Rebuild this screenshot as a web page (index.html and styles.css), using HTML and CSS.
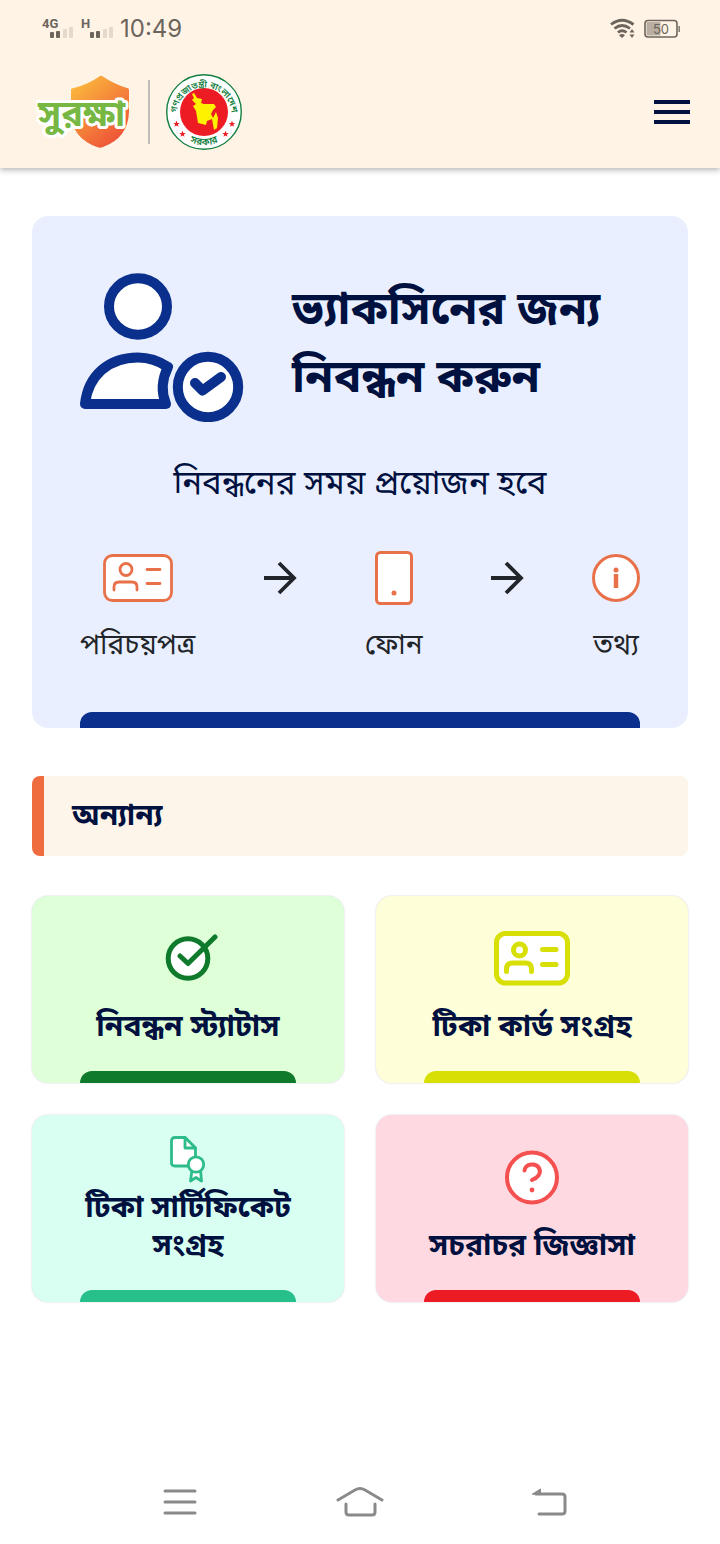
FILE: index.html
```html
<!DOCTYPE html>
<html lang="bn">
<head>
<meta charset="utf-8">
<meta name="viewport" content="width=device-width, initial-scale=1">
<title>সুরক্ষা</title>
<link rel="stylesheet" href="styles.css">
</head>
<body>
<header class="top">
  <div class="status">
    <div class="status-group">
      <svg class="signals" width="72" height="24" viewBox="0 0 72 24" aria-hidden="true">
        <g fill="#6b655d">
          <text class="net" x="0" y="11">4G</text><text class="net" x="39" y="11">H</text>
          <rect x="8" y="15" width="4" height="6" rx="1"/><rect x="14" y="14" width="4" height="7" rx="1"/>
          <rect x="48" y="15" width="4" height="6" rx="1"/><rect x="54" y="14" width="4" height="7" rx="1"/>
        </g>
        <g fill="#e3d9cc">
          <rect x="21" y="12" width="4" height="9" rx="1"/><rect x="27" y="10" width="4" height="11" rx="1"/>
          <rect x="61" y="12" width="4" height="9" rx="1"/><rect x="67" y="10" width="4" height="11" rx="1"/>
        </g>
      </svg>
      <time class="clock">10:49</time>
    </div>
    <div class="status-group">
      <svg width="26" height="22" viewBox="0 0 26 22" aria-hidden="true">
        <g fill="none" stroke="#6b655d" stroke-width="2.8">
          <path d="M1 6.500Q12 -2 23.500 6.500M4.500 10.500Q12 4.500 20 10.500M8 14.500Q12 11 16.500 14.500"/>
        </g>
        <path d="M9 17.200Q12 14.800 15 17.200L12 20ZM19.500 14.500L22 11L24.500 14.500ZM19.500 16.500L22 20L24.500 16.500Z" fill="#6b655d"/>
      </svg>
      <svg class="battery" width="36" height="20" viewBox="0 0 36 20" aria-hidden="true">
        <rect x="1" y="1.500" width="32" height="16.500" rx="3" fill="none" stroke="#6b655d" stroke-width="1.600"/>
        <rect x="2.500" y="3" width="14" height="13.500" rx="1" fill="#b9aea2"/>
        <rect x="34.500" y="7" width="1.300" height="6" fill="#6b655d"/>
        <text class="charge" x="17" y="15" text-anchor="middle">50</text>
      </svg>
    </div>
  </div>
  <div class="brand-bar">
    <a class="brand" href="#" aria-label="সুরক্ষা">
      <svg width="96" height="80" viewBox="0 0 96 80">
        <defs><linearGradient id="shield" x1="0" y1="0" x2="0.700" y2="1"><stop offset="0" stop-color="#fcc43c"/><stop offset="1" stop-color="#ee5238"/></linearGradient></defs>
        <path d="M64 4Q65 3.500 66 4Q78 12 91 16Q93 16 93 18V40Q92 66 67 75Q64 76.500 61 75Q36 66 35 42V18Q35 16 38 16Q53 12 64 4Z" fill="url(#shield)"/>
        <text class="wordmark" x="2" y="54">সুরক্ষা</text>
      </svg>
    </a>
    <span class="divider"></span>
    <svg class="seal" width="76" height="76" viewBox="0 0 76 76" role="img" aria-label="গণপ্রজাতন্ত্রী বাংলাদেশ সরকার">
      <defs>
        <path id="arc-top" d="M10.500 41A27.500 27.500 0 1 1 65.500 41"/>
        <path id="arc-bottom" d="M16 63A34 34 0 0 0 60 63"/>
        <path id="star" d="M0 -3.400L0.850 -1.100L3.250 -1.050L1.350 0.450L2 2.750L0 1.400L-2 2.750L-1.350 0.450L-3.250 -1.050L-0.850 -1.100Z"/>
      </defs>
      <circle cx="38" cy="38" r="37.300" fill="#fff" stroke="#128040" stroke-width="1.400"/>
      <circle cx="38" cy="38" r="24" fill="#ed1c24"/>
      <path d="M26 20L28 19L31 24L36 25L35 29L38 30H48L50 33L47 36L45 40L47 44L50 38L52 44L51 54L48 56L46 45L41 47L40 51L32 49L30 37L27 32L30 30L26 26L28 24Z" fill="#fff200"/>
      <g fill="#ed1c24"><use href="#star" x="10.500" y="50"/><use href="#star" x="16.500" y="60"/><use href="#star" x="59.500" y="60"/><use href="#star" x="66" y="50"/></g>
      <text class="seal-text"><textPath href="#arc-top" startOffset="50%" text-anchor="middle">গণপ্রজাতন্ত্রী বাংলাদেশ</textPath></text>
      <text class="seal-text seal-text-base"><textPath href="#arc-bottom" startOffset="50%" text-anchor="middle">সরকার</textPath></text>
    </svg>
    <button class="menu" type="button" aria-label="মেনু"><span></span><span></span><span></span></button>
  </div>
</header>

<main class="page">
  <section class="hero">
    <div class="hero-head">
      <svg class="hero-icon" width="164" height="150" viewBox="0 0 164 150" aria-hidden="true">
        <g fill="#fff" stroke="#0a2f8c" stroke-width="10" stroke-linejoin="round" stroke-linecap="round">
          <ellipse cx="58" cy="34.500" rx="29" ry="28.200"/>
          <path d="M5 132C8 104 28 85.500 58 85.500C69 85.500 79 89 88 95C82 107 81 120 86 132Z"/>
          <circle cx="128" cy="115" r="30.200"/>
          <path d="M115 111L122.500 118.500L141 105" fill="none"/>
        </g>
      </svg>
      <h1 class="hero-title">ভ্যাকসিনের জন্য নিবন্ধন করুন</h1>
    </div>
    <p class="hero-sub">নিবন্ধনের সময় প্রয়োজন হবে</p>
    <div class="steps">
      <div class="step">
        <svg width="70" height="56" viewBox="0 0 70 56" aria-hidden="true">
          <g fill="#fff" stroke="#e8714a" stroke-width="2.800" stroke-linecap="round">
            <rect x="1.500" y="5.500" width="67" height="45" rx="8"/><circle cx="23" cy="19.500" r="6"/>
            <path d="M11 40V37Q11 32 16 32H29Q34 32 34 37V40" fill="none"/><path d="M44 19.500H57M44 33.500H57"/>
          </g>
        </svg>
        <span>পরিচয়পত্র</span>
      </div>
      <svg class="arrow" width="34" height="56" viewBox="0 0 34 56" aria-hidden="true"><path d="M1 28H31M16 13L31 28L16 43" fill="none" stroke="#212529" stroke-width="3.800"/></svg>
      <div class="step">
        <svg width="40" height="56" viewBox="0 0 40 56" aria-hidden="true"><rect x="2.500" y="2.500" width="35" height="51" rx="4" fill="#fff" stroke="#e8714a" stroke-width="3"/><circle cx="20" cy="43" r="2.500" fill="#e8714a"/></svg>
        <span>ফোন</span>
      </div>
      <svg class="arrow" width="34" height="56" viewBox="0 0 34 56" aria-hidden="true"><path d="M1 28H31M16 13L31 28L16 43" fill="none" stroke="#212529" stroke-width="3.800"/></svg>
      <div class="step">
        <svg width="48" height="56" viewBox="0 0 48 56" aria-hidden="true"><circle cx="24" cy="28" r="22.500" fill="#fff" stroke="#e8714a" stroke-width="3"/><circle cx="24" cy="20" r="2.500" fill="#e8714a"/><path d="M24 24V38" stroke="#e8714a" stroke-width="4.500"/></svg>
        <span>তথ্য</span>
      </div>
    </div>
    <div class="hero-bar"></div>
  </section>

  <h2 class="section-title">অন্যান্য</h2>

  <nav class="cards">
    <a class="card card-green" href="#">
      <svg class="card-icon" width="60" height="56" viewBox="-2 0 60 56" aria-hidden="true">
        <g fill="#fff" stroke="#0f7a2c" stroke-width="5" stroke-linecap="round" stroke-linejoin="round"><circle cx="28" cy="28.500" r="19.800"/><path d="M20 26L28 33.500L55 7" fill="none"/></g>
      </svg>
      <span>নিবন্ধন স্ট্যাটাস</span>
    </a>
    <a class="card card-yellow" href="#">
      <svg class="card-icon" width="78" height="56" viewBox="0 0 78 56" aria-hidden="true">
        <g fill="#fff" stroke="#d8df05" stroke-width="5" stroke-linecap="round"><rect x="3.500" y="3.500" width="71" height="49.500" rx="9"/><circle cx="26.500" cy="20" r="6"/><path d="M13.500 41.500V39Q13.500 33 19.500 33H32.500Q38.500 33 38.500 39V41.500" fill="none"/><path d="M49.500 19.500H63M49.500 34.500H63"/></g>
      </svg>
      <span>টিকা কার্ড সংগ্রহ</span>
    </a>
    <a class="card card-teal" href="#">
      <svg class="card-icon-tight" width="38" height="48" viewBox="0 0 38 48" aria-hidden="true">
        <g fill="#fff" stroke="#2ebd8a" stroke-width="2.800" stroke-linejoin="round"><path d="M6 2.500H16L26.500 13V31H6Q2.500 31 2.500 28V6Q2.500 2.500 6 2.500Z"/><path d="M16 2.500V13H26.500Z"/><path d="M23 35L21.500 46L27 42.500L32.500 46L31.500 35"/><circle cx="27" cy="29.500" r="7.700"/></g>
      </svg>
      <span>টিকা সার্টিফিকেট সংগ্রহ</span>
    </a>
    <a class="card card-red" href="#">
      <svg class="card-icon" width="56" height="56" viewBox="0 0 56 56" aria-hidden="true">
        <circle cx="28" cy="28.500" r="25" fill="#fff" stroke="#f55050" stroke-width="4"/><path d="M20.500 21.500C21.500 14.500 32 13.500 35 19C38 25 33 29 28 31" fill="none" stroke="#f55050" stroke-width="4" stroke-linecap="round"/><circle cx="28" cy="41" r="2.400" fill="#f55050"/>
      </svg>
      <span>সচরাচর জিজ্ঞাসা</span>
    </a>
  </nav>
</main>

<footer class="sysnav">
  <button type="button" aria-label="Recent apps"><svg width="34" height="28" viewBox="0 0 34 28"><path d="M2 3H32M2 14H32M2 25H32"/></svg></button>
  <button type="button" aria-label="Home"><svg width="48" height="32" viewBox="0 0 48 32"><path d="M2 14L19 4Q24 1 29 4L46 14M10 18V26Q10 29 13 29H36Q39 29 39 26V18"/></svg></button>
  <button type="button" aria-label="Back"><svg width="54" height="30" viewBox="-18 0 54 30"><path d="M5 7H31Q34 7 34 10V24Q34 27 31 27H8"/><path class="solid" d="M1.500 7L9.500 2V7Z"/></svg></button>
</footer>
</body>
</html>
```
FILE: styles.css
```css
* { box-sizing: border-box; }

body {
  margin: 0;
  min-height: 100vh;
  display: flex;
  flex-direction: column;
  background: #fff;
  color: #001140;
  font-family: "Noto Sans", "Noto Sans Bengali", sans-serif;
}

h1, h2, p { margin: 0; }
svg { display: block; flex: none; }
button { border: 0; padding: 0; background: none; cursor: pointer; }

.top {
  background: #fff3e5;
  box-shadow: 0 2px 6px rgba(0, 0, 0, 0.3);
}

.status {
  display: flex;
  justify-content: space-between;
  align-items: center;
  height: 56px;
  padding: 2px 40px 0 42px;
  color: #6b655d;
}
.status-group { display: flex; align-items: center; gap: 8px; }
.signals + .clock { margin-left: -2px; }
.clock { font: 400 24px/32px Inter, Roboto, sans-serif; }
.net { font: 700 13px Roboto, sans-serif; }
.charge { font: 400 13px Inter, sans-serif; fill: #6b655d; }

.brand-bar {
  display: flex;
  align-items: center;
  height: 112px;
  padding: 0 30px 0 36px;
}
.wordmark {
  font-size: 36px;
  font-weight: 700;
  fill: #76b843;
  stroke: #fff;
  stroke-width: 6px;
  stroke-linejoin: round;
  paint-order: stroke;
}
.divider { width: 2px; height: 64px; margin: 0 16px; background: #bfbcb8; }
.seal-text { font-size: 9px; font-weight: 600; fill: #128040; }
.seal-text-base { font-size: 10px; }
.menu { display: grid; gap: 6px; width: 36px; margin-left: auto; }
.menu span { height: 4px; background: #001140; }

.page { flex: 1; padding: 48px 32px 32px; }

.hero {
  padding: 56px 48px 0;
  border-radius: 16px;
  background: #e9effe;
}
.hero-head { display: flex; align-items: flex-start; gap: 48px; }
.hero-title { font-size: 46px; line-height: 68px; font-weight: 700; }
.hero-sub {
  margin-top: 36px;
  font-size: 33px;
  line-height: 48px;
  text-align: center;
}
.steps {
  display: flex;
  justify-content: space-between;
  align-items: flex-start;
  margin-top: 44px;
  color: #212529;
}
.step {
  display: flex;
  flex-direction: column;
  align-items: center;
  gap: 16px;
  font-size: 28px;
  line-height: 42px;
}
.hero-bar {
  height: 16px;
  margin-top: 48px;
  border-radius: 12px 12px 0 0;
  background: #0a2f8c;
}

.section-title {
  margin: 48px 0 40px;
  padding: 14px 28px 18px;
  border-left: 12px solid #ef6c3f;
  border-radius: 8px;
  background: #fef5ea;
  font-size: 30px;
  line-height: 48px;
}

.cards { display: grid; grid-template-columns: 1fr 1fr; gap: 32px; }
.card {
  display: flex;
  flex-direction: column;
  align-items: center;
  justify-content: flex-end;
  min-height: 187px;
  padding: 0 40px;
  border-radius: 16px;
  box-shadow: 0 0 2px rgba(0, 16, 64, 0.2);
  color: #001140;
  font-size: 30px;
  line-height: 38px;
  font-weight: 700;
  text-align: center;
  text-decoration: none;
}
.card::after {
  content: "";
  width: 216px;
  max-width: 100%;
  height: 12px;
  margin-top: 27px;
  border-radius: 12px 12px 0 0;
  background: currentColor;
}
.card-icon { margin-bottom: 20px; }
.card-icon-tight { margin-bottom: 4px; }
.card-green { background: #dfffd9; }
.card-green::after { background: #0f7a2c; }
.card-yellow { background: #feffd9; }
.card-yellow::after { background: #d8df05; }
.card-teal { background: #d9fff2; }
.card-teal::after { background: #27c08b; }
.card-red { background: #ffd9e1; }
.card-red::after { background: #ed1c24; }

.sysnav {
  display: grid;
  grid-template-columns: repeat(3, 1fr);
  align-items: center;
  width: 75%;
  height: 84px;
  margin: 0 auto;
}
.sysnav button { justify-self: center; }
.sysnav path {
  fill: none;
  stroke: #8a8a8a;
  stroke-width: 3;
  stroke-linecap: round;
}
.sysnav .solid { fill: #8a8a8a; stroke-width: 1; }
```
